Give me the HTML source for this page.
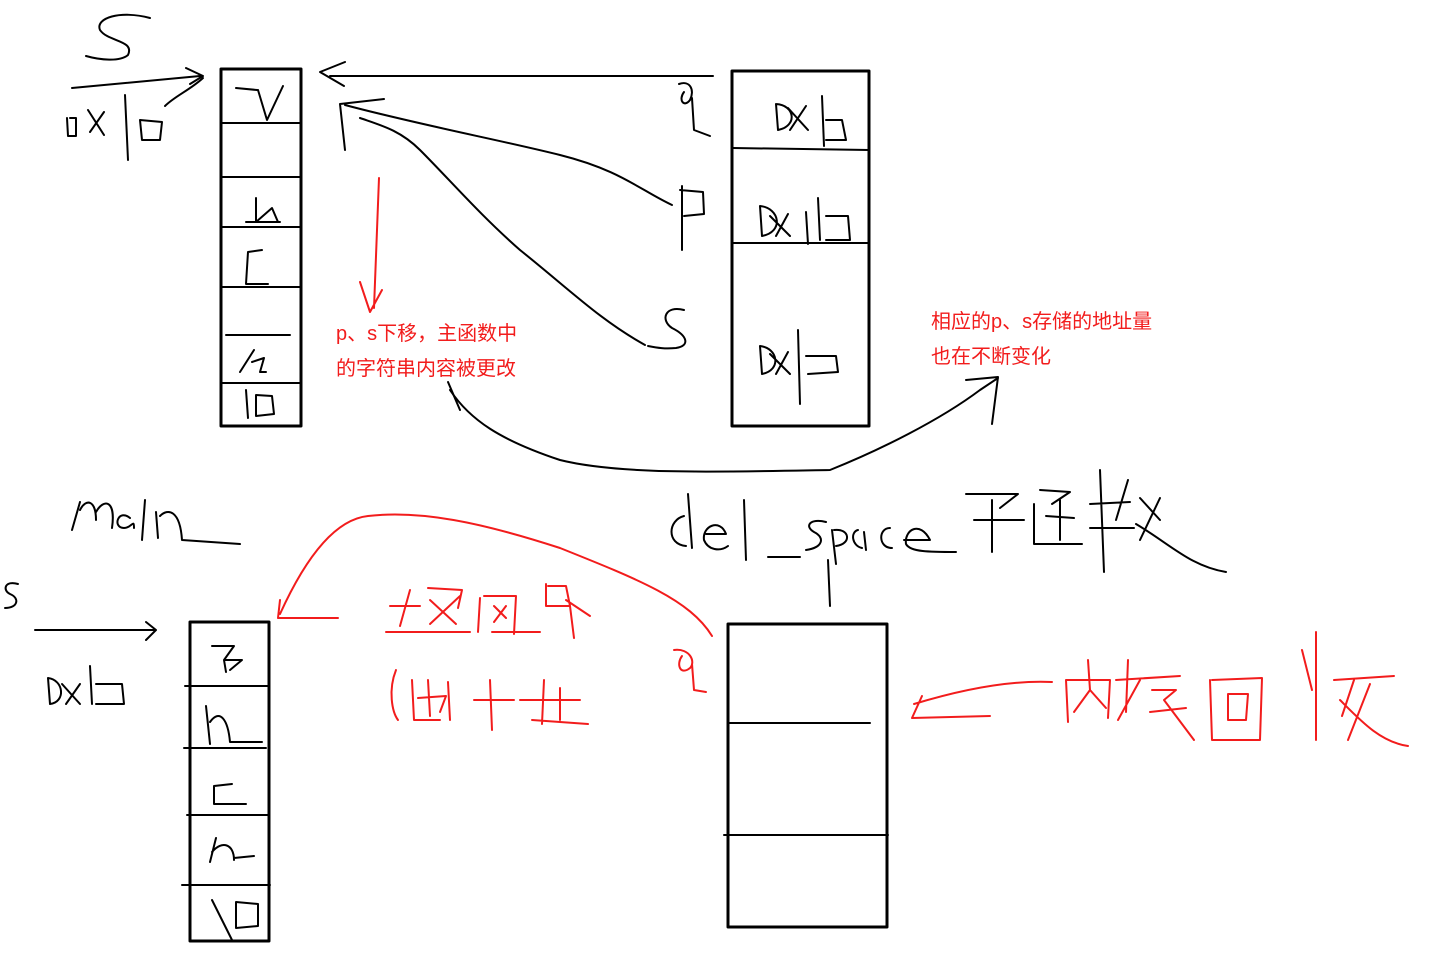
<!DOCTYPE html>
<html><head><meta charset="utf-8"><style>
html,body{margin:0;padding:0;background:#fff;}
svg{display:block}
.t{font-family:"Liberation Sans","Noto Sans CJK SC",sans-serif;font-size:20px;fill:#f21c1c}
</style></head><body>
<svg width="1432" height="961" viewBox="0 0 1432 961" xmlns="http://www.w3.org/2000/svg">
<g fill="none" stroke="#000" stroke-width="2" stroke-linejoin="round" stroke-linecap="round">
<rect x="221" y="69" width="80" height="357" stroke-width="3"/>
<rect x="732" y="71" width="137" height="355" stroke-width="3"/>
<rect x="190" y="622" width="79" height="319" stroke-width="3"/>
<rect x="728" y="624" width="159" height="303" stroke-width="3"/>
<path d="M222 123H300M222 177H300M222 227H300M222 287H300M226 335H290M222 383H300"/>
<path d="M733 148L869 150M733 243L869 243"/>
<path d="M185 686H268M184 748H266M187 815H268M182 885H270"/>
<path d="M728 723L870 723M724 835L888 835"/>
<path d="M150 18C120 10 95 18 100 30C108 42 135 40 128 55C120 62 100 60 86 56"/>
<path d="M72 88L200 76M186 68L203 76L190 84"/>
<path d="M203 78C190 90 175 96 165 106"/>
<path d="M67 118L68 136M70 118L76 118L76 136L68 136"/>
<path d="M88 110L104 135M104 112L90 132"/>
<path d="M125 95L128 160M140 120L162 122L160 140L142 140L140 120"/>
<path d="M236 88L257 90M258 90L267 120L283 86"/>
<path d="M256 198L256 222M256 222L272 208L278 222M246 222H280"/>
<path d="M262 250L248 252L246 284L268 284"/>
<path d="M254 350L240 372M252 362L264 358L260 372H266"/>
<path d="M246 390L248 418M256 395L272 396L274 414L256 416Z"/>
<path d="M713 76L330 76M345 62L320 72L344 86"/>
<path d="M679 84C690 80 695 90 690 100C684 108 678 100 684 92M692 98L694 130L710 136"/>
<path d="M682 186L682 250M680 190L703 192L704 214L684 216"/>
<path d="M672 205C640 190 620 170 560 155C500 140 420 125 345 105M384 99L340 104L345 150"/>
<path d="M684 310C665 305 660 320 672 328C688 336 690 346 676 348C665 349 658 348 648 346"/>
<path d="M645 345C600 320 570 290 520 250C480 215 450 180 420 150C400 130 380 125 360 118"/>
<path d="M776 104L778 130M776 104C795 105 798 126 778 130M788 108L808 130M806 106L790 130M822 96L824 146M826 120L842 120L846 140L826 140"/>
<path d="M760 206L762 236M760 206C780 208 784 232 762 236M770 216L790 236M788 214L776 236M806 212L808 244M818 198L820 240M826 216L848 216L850 240L826 240"/>
<path d="M760 346L762 374M760 346C778 348 782 370 762 374M770 354L790 374M788 352L776 374M798 330L800 404M806 356L836 356L838 372L808 374"/>
<path d="M450 390C470 420 500 440 560 460C620 475 720 472 830 470C880 450 940 420 980 390L998 378M966 380L998 377L992 424"/>
<path d="M448 382L460 410"/>
<path d="M72 530L80 502M80 510C86 498 96 500 96 520M96 512C104 498 116 500 112 528M130 518C118 508 112 528 124 528C132 528 134 518 134 528M145 500L142 540M156 512L158 538M160 516C168 508 180 510 182 540L240 544"/>
<path d="M18 584C5 580 2 590 10 594C20 598 18 608 5 608"/>
<path d="M35 630L155 630M146 622L156 630L146 640"/>
<path d="M48 678L50 704M48 678C64 680 66 702 50 704M62 684L80 704M80 684L66 704M90 666L92 704M96 684L122 684L124 704L96 704"/>
<path d="M212 646L234 646L224 660L242 660L230 670M224 660L226 672"/>
<path d="M206 706L210 744M210 722C220 708 228 720 230 742L262 742"/>
<path d="M232 784L214 786L214 804L246 804"/>
<path d="M216 838L210 862M212 852C222 840 234 844 234 860M234 858L254 856"/>
<path d="M212 900L232 940M236 902L258 904L258 926L236 928Z"/>
<path d="M684 516C668 520 666 544 686 546M688 494L692 548M706 534H726C720 518 702 526 704 540C708 550 720 552 728 546M744 500L746 560M768 557H800M826 522C810 518 804 526 814 532C826 538 822 548 806 550M832 530L836 564M834 530C850 528 852 544 836 546M858 530C850 532 852 546 862 548M864 532L866 550M890 528C878 528 878 548 892 548M904 540H930C920 520 904 530 906 544C910 552 930 552 956 552"/>
<path d="M966 494L1018 494L1000 508M992 500L992 552M974 520L1024 520"/>
<path d="M1040 490L1070 492L1052 504M1060 500L1060 540M1046 516L1074 518M1034 504L1034 544L1082 544"/>
<path d="M1100 470L1104 572M1090 504L1130 502M1090 528L1134 528M1128 480L1116 520M1140 498L1160 520M1160 498L1140 540M1136 524C1170 544 1190 566 1226 572"/>
<path d="M828 560L830 606"/>
</g>
<g fill="none" stroke="#f21c1c" stroke-width="2" stroke-linejoin="round" stroke-linecap="round">
<path d="M379 178L374 308M360 282L370 312L382 290"/>
<path d="M712 636C690 600 640 580 560 548C480 522 420 510 368 516C330 520 300 570 280 614M280 600L278 618L338 618"/>
<path d="M674 650C690 648 696 662 690 668C680 676 676 664 682 656M692 664L694 690L706 692"/>
<path d="M390 606L420 606M410 590L400 626M386 632L470 632M428 588L462 590L458 608M430 600L456 624M460 596L430 624"/>
<path d="M480 598L478 632M484 596L516 596L514 634M494 606L506 618M506 606L494 622M492 632H540"/>
<path d="M546 584L546 606L570 606L566 586L548 586M570 606L574 638M566 600L590 616"/>
<path d="M396 670C388 690 392 712 398 720M412 680L414 720L440 720M418 698L446 696L440 712M428 680L430 716M448 682L450 720"/>
<path d="M490 680L492 730M474 700L514 700M520 700L580 700M544 680L542 724M560 688L560 720M532 720L588 724"/>
<path d="M912 718L922 696M912 718L990 716M914 704C960 690 1010 680 1052 682"/>
<path d="M1066 680L1068 722M1066 680L1110 680L1108 718M1088 660L1090 690L1106 708M1090 690L1074 712"/>
<path d="M1128 660L1126 712M1116 680L1180 676M1140 680L1118 720M1152 690L1176 690L1164 700L1194 740M1150 712L1186 708"/>
<path d="M1210 680L1212 740M1212 680L1262 678L1260 740L1212 740M1228 694L1248 694L1246 720L1228 720Z"/>
<path d="M1302 650L1312 690M1316 632L1316 740M1334 680L1394 676M1354 680L1342 716M1340 700C1360 720 1380 742 1408 746M1370 684L1348 740"/>
</g>
<text class="t" x="336" y="340">p、s下移，主函数中</text>
<text class="t" x="336" y="375">的字符串内容被更改</text>
<text class="t" x="931" y="328">相应的p、s存储的地址量</text>
<text class="t" x="931" y="363">也在不断变化</text>
</svg>
</body></html>
